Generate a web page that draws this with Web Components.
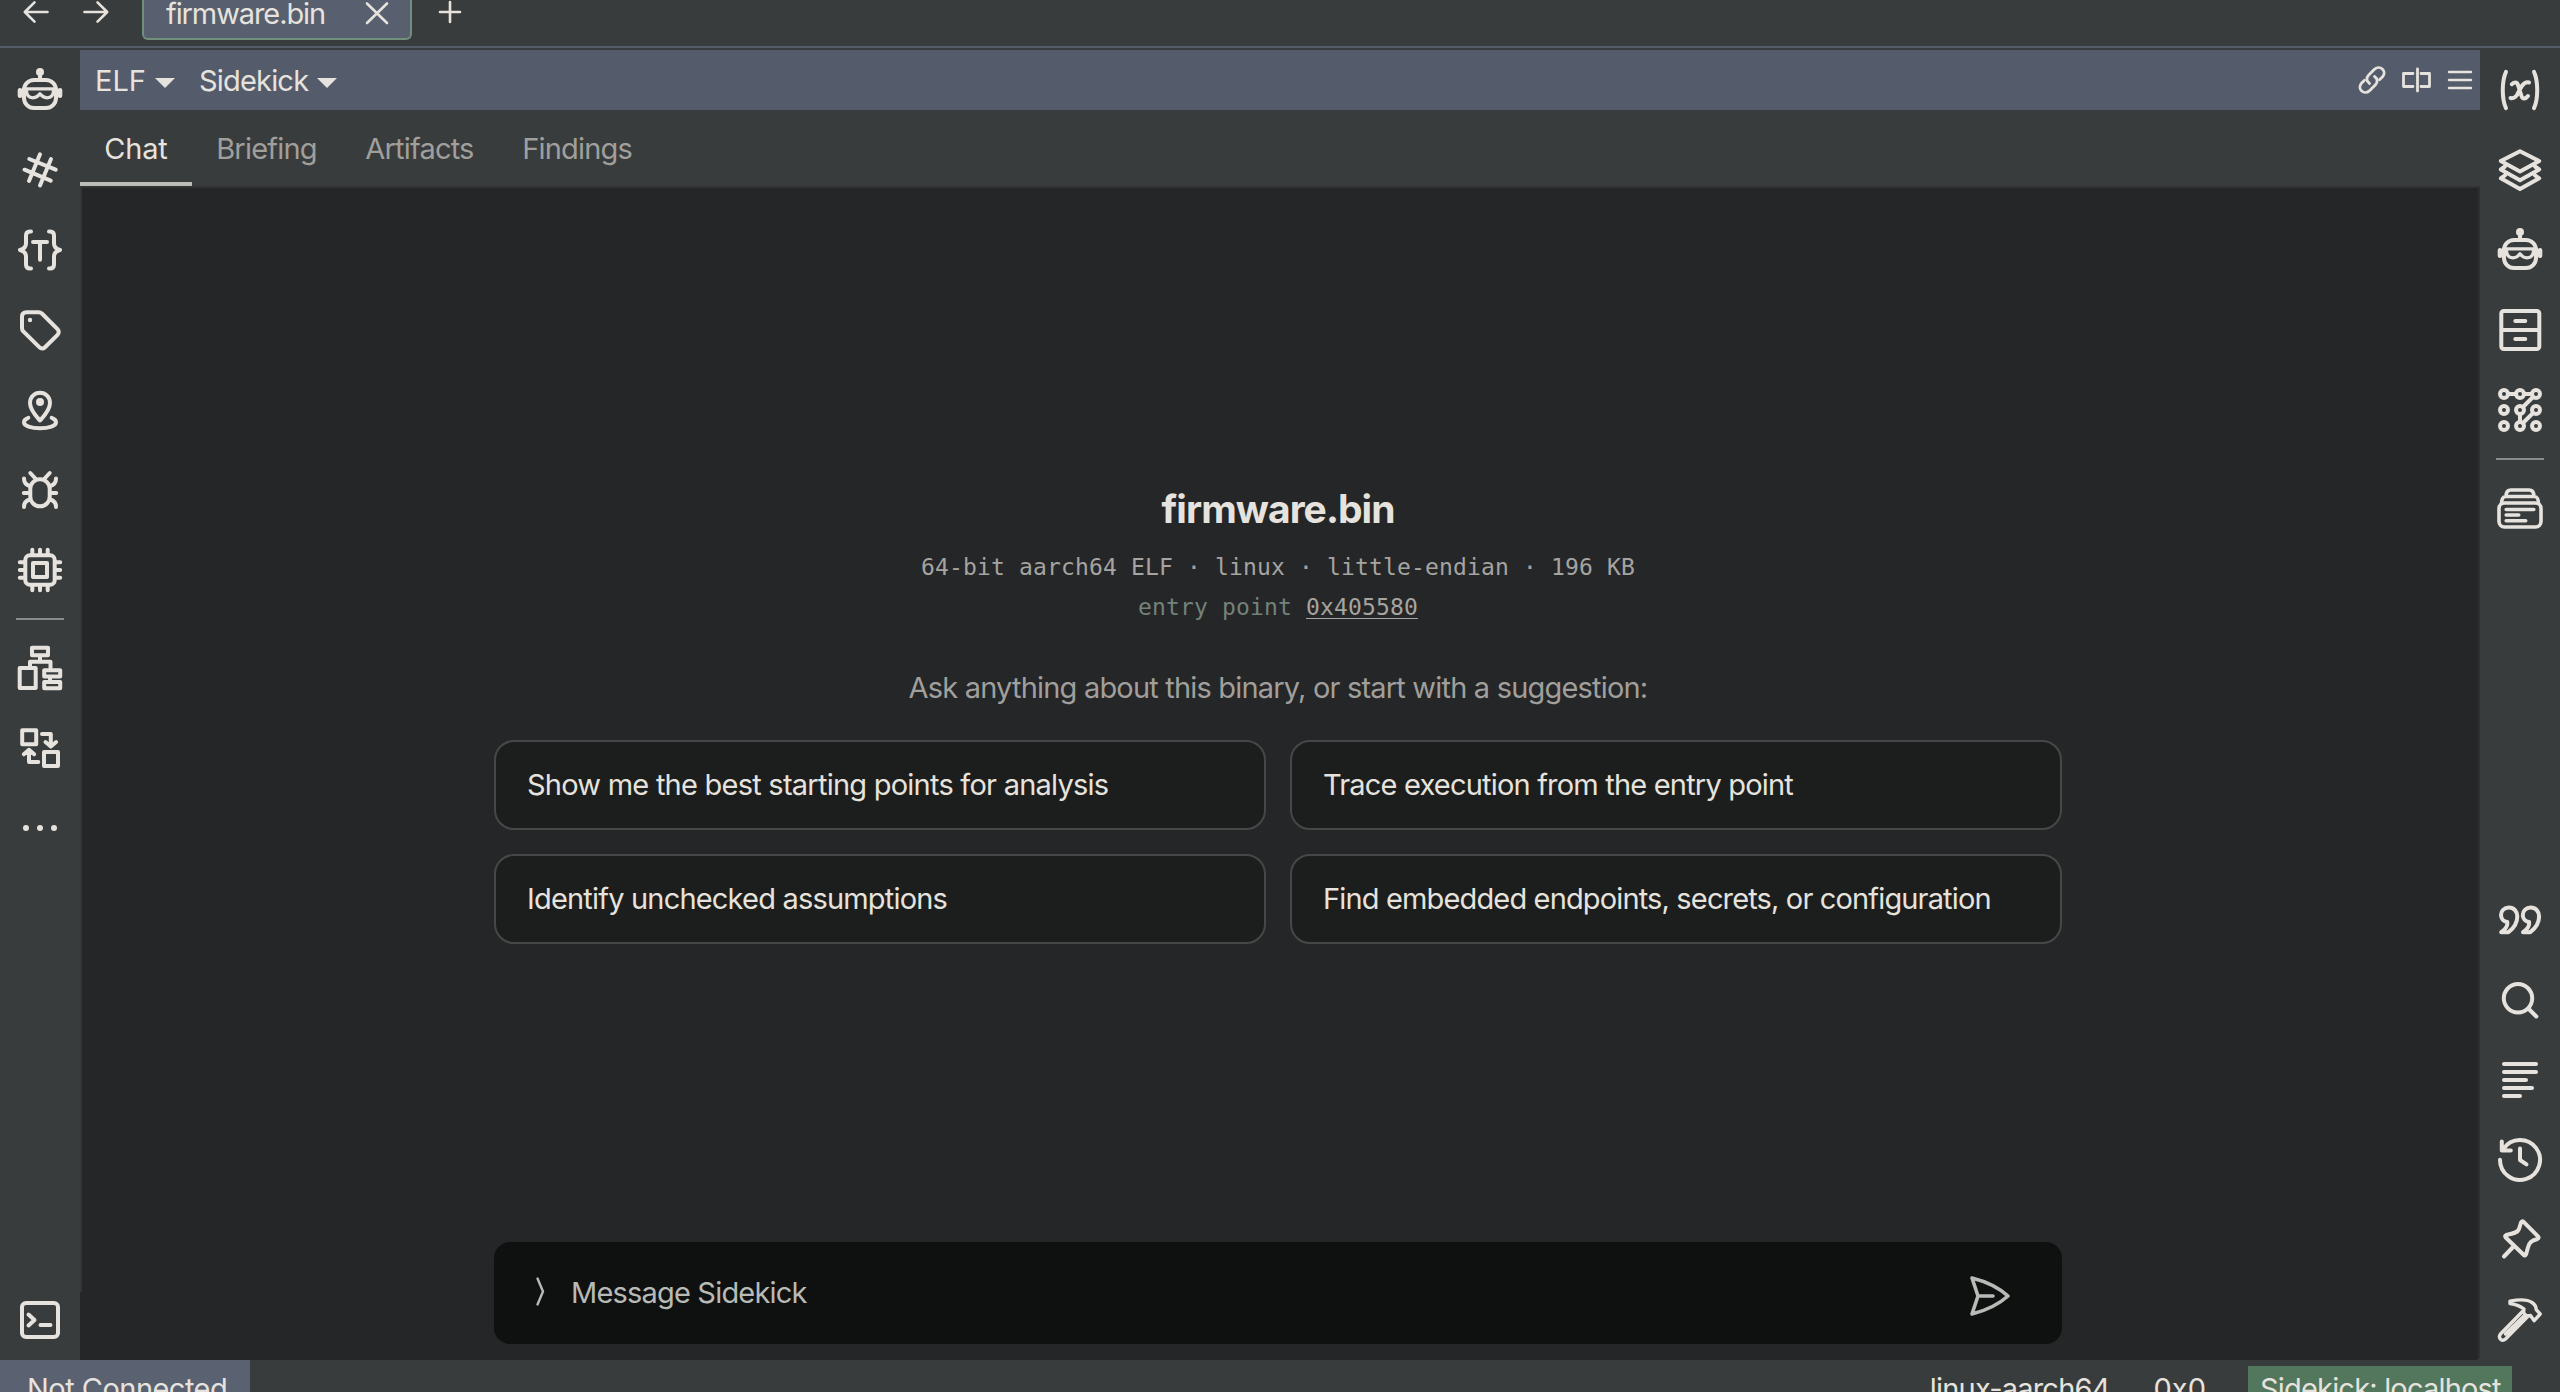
<!DOCTYPE html>
<html lang="en">
<head>
<meta charset="utf-8">
<title>firmware.bin</title>
<style>
    html, body {
        margin: 0;
        height: 100%;
        overflow: hidden;
        background: #393c3d;
    }

    body {
        --rail: #393c3d;
        --canvas: #252628;
        --accent: #545b6b;
        --text: #e6e3de;
        --muted: #a09f9b;

        color: var(--text);
        font-family: Inter, "Liberation Sans", sans-serif;
        font-size: 29px;
        letter-spacing: -0.81px;
        white-space: nowrap;
    }
</style>
</head>
<body>
<app-window>
    <window-tabs slot="tabs">firmware.bin</window-tabs>

    <side-rail slot="left">
        <rail-icon name="robot"></rail-icon>
        <rail-icon name="hash"></rail-icon>
        <rail-icon name="types"></rail-icon>
        <rail-icon name="tag"></rail-icon>
        <rail-icon name="pin"></rail-icon>
        <rail-icon name="bug"></rail-icon>
        <rail-icon name="chip"></rail-icon>
        <rail-separator></rail-separator>
        <rail-icon name="hierarchy"></rail-icon>
        <rail-icon name="swap"></rail-icon>
        <rail-icon name="dots"></rail-icon>
        <rail-icon name="terminal" slot="bottom"></rail-icon>
    </side-rail>

    <pane-header slot="header">
        <drop-label style="width: 104px; letter-spacing: 0">ELF</drop-label>
        <drop-label>Sidekick</drop-label>
    </pane-header>

    <tab-strip slot="header">
        <tab-item active style="letter-spacing: -0.2px">Chat</tab-item>
        <tab-item>Briefing</tab-item>
        <tab-item>Artifacts</tab-item>
        <tab-item>Findings</tab-item>
    </tab-strip>

    <chat-welcome>
        <span slot="title">firmware.bin</span>
        <span slot="meta">64-bit aarch64 ELF · linux · little-endian · 196 KB</span>
        <span slot="address">0x405580</span>
        <suggestion-card style="letter-spacing: -0.76px">Show me the best starting points for analysis</suggestion-card>
        <suggestion-card>Trace execution from the entry point</suggestion-card>
        <suggestion-card>Identify unchecked assumptions</suggestion-card>
        <suggestion-card style="letter-spacing: -0.85px">Find embedded endpoints, secrets, or configuration</suggestion-card>
    </chat-welcome>
    <message-box>Message Sidekick</message-box>

    <side-rail slot="right">
        <rail-icon name="variables"></rail-icon>
        <rail-icon name="layers"></rail-icon>
        <rail-icon name="robot"></rail-icon>
        <rail-icon name="cabinet"></rail-icon>
        <rail-icon name="nodes"></rail-icon>
        <rail-separator></rail-separator>
        <rail-icon name="archive"></rail-icon>
        <rail-icon name="quotes" slot="bottom"></rail-icon>
        <rail-icon name="search" slot="bottom"></rail-icon>
        <rail-icon name="lines" slot="bottom"></rail-icon>
        <rail-icon name="history" slot="bottom"></rail-icon>
        <rail-icon name="pushpin" slot="bottom"></rail-icon>
        <rail-icon name="hammer" slot="bottom"></rail-icon>
    </side-rail>

    <status-bar slot="status">
        <span slot="left">Not Connected</span>
        <span>linux-aarch64</span>
        <span style="letter-spacing: 0">0x0</span>
        <span slot="badge">Sidekick: localhost</span>
    </status-bar>
</app-window>

<script>
// All rail icons are drawn on a 48x48 grid with a 4px stroke.
const ICONS = {
    robot: `
        <circle cx="24" cy="6" r="4" fill="currentColor" stroke="none"/>
        <path d="M24 8v5"/>
        <rect x="8" y="14" width="32" height="28" rx="10"/>
        <path stroke-width="4.6" d="M4 24.2v5.6M44 24.2v5.6"/>
        <path stroke-width="3.2" d="M9 22.8H39M10.5 24C10.5 29 12 31.8 17 31.8C20.5 31.8 22 30.5 24 27.8C26 30.5 27.500 31.8 31 31.8C36 31.8 37.500 29 37.500 24"/>`,
    hash: '<path d="M24 8.300 13 35M35 13 24 39.500M13.300 13l26.400 10.700M8.500 23.700l26.200 11"/>',
    types: `
        <path d="M15 5.500h-1c-3 0-4 1.500-4 4v8c0 4-2 5.500-6 6.500 4 1 6 2.500 6 6.500v8c0 2.500 1 4 4 4h1"/>
        <path d="M33 5.500h1c3 0 4 1.500 4 4v8c0 4 2 5.500 6 6.500-4 1-6 2.500-6 6.500v8c0 2.500-1 4-4 4h-1"/>
        <path d="M17 16h14M24 16v17.800"/>`,
    tag: `
        <path d="M10.500 6.200h12.200c1.200 0 2.300.5 3.200 1.300l15.600 15.700c1.700 1.700 1.700 4 0 5.700L29 41.200c-1.700 1.700-4 1.700-5.700 0L7.300 25.400C6.500 24.500 6 23.400 6 22.200V10.700c0-3 1.500-4.500 4.500-4.500z"/>
        <circle cx="14" cy="14" r="2.200" fill="currentColor" stroke="none"/>`,
    pin: `
        <path d="M24 34.500c-4-4.500-10-10.500-10-17.500 0-6 4.500-10.200 10-10.200S34 11 34 17c0 7-6 13-10 17.500z"/>
        <circle cx="24" cy="16" r="4" fill="currentColor" stroke="none"/>
        <path d="M12.300 31.800C9 33 8 34.500 8 36.200c0 3.700 7 6.100 16 6.100s16-2.400 16-6.100c0-1.700-1-3.200-4.300-4.400"/>`,
    bug: `
        <rect x="14.300" y="13.300" width="19.400" height="27" rx="9.500"/>
        <path d="M14.300 7l5.500 6M33.700 7l-5.500 6M8 12.500c0 4 2 6.500 6 7.500M40 12.500c0 4-2 6.500-6 7.500M7.800 27h6M40.200 27h-6M8 41c0-4.500 2-6.500 6-7.500M40 41c0-4.500-2-6.500-6-7.500"/>`,
    chip: `
        <rect x="9.300" y="9.300" width="29.400" height="29.400" rx="4.500"/>
        <rect x="17" y="17" width="14" height="14"/>
        <path d="M16.300 3.800V8M24 3.800V8M31.700 3.800V8M16.300 40v4.200M24 40v4.200M31.700 40v4.200M3.800 16.300H8M3.800 24H8M3.800 31.700H8M40 16.300h4.200M40 24h4.200M40 31.700h4.200"/>`,
    hierarchy: `
        <rect x="16" y="3.700" width="16" height="7.600"/>
        <rect x="3.700" y="24" width="16" height="20"/>
        <path d="M24 12v5M14 23v-5.200h20.500V24"/>
        <rect x="28.200" y="26.200" width="16" height="6.200"/>
        <path d="M34 33v4"/>
        <rect x="28.200" y="38" width="16" height="6.200"/>`,
    swap: `
        <rect x="6.200" y="6.200" width="14" height="14"/>
        <rect x="28" y="28" width="14" height="14"/>
        <path d="M26 10h8.800v12M29.500 18l5.300 4.500 5.300-4.500M22.300 38H13V26M7.800 30.300 13 25.800l5.200 4.500"/>`,
    dots: `
        <g fill="currentColor" stroke="none"><circle cx="10" cy="24" r="3"/><circle cx="24" cy="24" r="3"/><circle cx="38" cy="24" r="3"/></g>`,
    terminal: `
        <rect x="6" y="7" width="36" height="34" rx="4"/>
        <path d="M12.500 18.500l6 5.500-6 5.500M24.500 29h10"/>`,
    variables: `
        <path d="M10 5.800C5.700 15 5.700 33 10 42.200M38 5.800c4.300 9.200 4.300 27.200 0 36.400"/>
        <path d="M15.800 18.200c2-2.400 5.200-2.600 6.200.8l3.500 11c1 3.400 4 3.200 6.500 0M33 16.500c-3-1-5 .5-7.500 4L21 29c-2 3-4 3.600-6.500 3"/>`,
    layers: `
        <path d="M24 5.200 43.200 15 24 25.500 4.800 15z"/>
        <path d="M9 20.500l-4.200 3L24 34.200l19.200-10.700-4.200-3M9 29.300l-4.200 3L24 43l19.200-10.700-4.200-3"/>`,
    cabinet: `
        <rect x="5.300" y="5" width="38" height="38" rx="2.500"/>
        <path d="M6 24h36M19.300 15h10M19.300 33h10"/>`,
    nodes: `
        <circle cx="8" cy="8" r="4"/><circle cx="24" cy="8" r="4"/><circle cx="40" cy="8" r="4"/>
        <circle cx="8" cy="24" r="4"/><circle cx="24" cy="24" r="4"/><circle cx="40" cy="24" r="4"/>
        <circle cx="8" cy="40" r="4"/><circle cx="24" cy="40" r="4"/><circle cx="40" cy="40" r="4"/>
        <path d="M12 8h8M28 8h8M37 11 27 21M24 28v8M27 37l10-10"/>`,
    archive: `
        <g stroke-width="3.600"><rect x="3" y="19" width="42" height="24" rx="5.500"/>
        <path d="M5.500 19.500c0-4 1.500-7 4-7h29c2.500 0 4 3 4 7M10 12.500C10 8 11.500 6 15 6h18c3.500 0 5 2 5 6.500M10.200 25.500h27.600M10.200 31h12.500M10.200 36.800h19.500"/></g>`,
    quotes: `
        <path d="M5.200 36.200C9 33.500 11.300 31 11.300 28V26C7.500 25.500 5 22.500 5 19C5 14.700 8.500 11.500 12.800 11.500C18 11.500 21.300 15.500 21.300 20.500C21.300 27 18 32 12.500 36.200z"/>
        <path d="M27 36.200C30.800 33.500 33.100 31 33.100 28V26C29.300 25.500 26.800 22.500 26.800 19C26.800 14.700 30.300 11.500 34.600 11.500C39.800 11.500 43.100 15.500 43.100 20.500C43.100 27 39.800 32 34.300 36.200z"/>`,
    search: '<circle cx="22" cy="22.300" r="14.200"/><path d="M32.300 32.500l8 8"/>',
    lines: '<path d="M8 8h32M8 16h32M8 24h22M8 32h28M8 40h16"/>',
    history: `
        <path d="M4 23.800A20 20 0 1 0 7.500 12.600M5.800 5.500v9h9"/>
        <path d="M24 12.500V24l6.500 4.300"/>`,
    pushpin: `
        <path d="M23 13l2-6.500c.6-1.300 1.600-1.600 2.600-.6L42 20.300c1 1 .7 2.200-.6 2.700-6.400 1.600-8 3.500-9.300 8l-2 7.300c-.5 1.300-1.600 1.500-2.500.5L9.700 21.500c-1-1-.7-2 .5-2.500C17 17.500 21.500 17 23 13z"/>
        <path d="M17.500 30.500 8 40.500"/>`,
    hammer: `
        <path stroke-width="3.400" d="M14 5.200C22 3.500 31 3 36 6.500c3 2 4.200 4 4.200 7.200l4 4.300-6 6.700-3.700-5.200-4 .5-3-3.500.5-3.500C25 10.500 20 8.500 14 7.500z"/>
        <path stroke-width="3.400" d="M26.500 15.500 4.500 38c-3 4 1.500 8.200 5 5L32 20.300M28 20 9.500 38"/>`
};

const SVG_STYLE = `
    svg {
        display: block;
        fill: none;
        stroke: currentColor;
        stroke-linecap: round;
        stroke-linejoin: round;
    }`;

function define(name, html) {
    customElements.define(name, class extends HTMLElement {
        constructor() {
            super();
            this.attachShadow({mode: 'open'});
        }

        connectedCallback() {
            this.shadowRoot.innerHTML = typeof html === 'function' ? html(this) : html;
        }
    });
}

define('app-window', `<style>
    :host {
        display: grid;
        grid-template-rows: 46px 2px 1312px 32px;
        height: 1392px;
        overflow: hidden;
    }
    .rule { background: var(--accent); }
    .body {
        display: grid;
        grid-template-columns: 80px 2400px 80px;
    }
    .main {
        display: flex;
        flex-direction: column;
        padding-top: 2px;
    }
    .canvas {
        flex: 1;
        display: flex;
        flex-direction: column;
        align-items: center;
        box-sizing: border-box;
        padding: 0 2px 16px 0;
        border-right: 2px solid #2d2f30;
        border-top: 2px solid #303233;
        background: linear-gradient(#333637, #333637) 0 0 / 2px 1104px no-repeat var(--canvas);
        border-bottom-right-radius: 4px;
    }
</style>
<slot name="tabs"></slot>
<div class="rule"></div>
<div class="body">
    <slot name="left"></slot>
    <div class="main">
        <slot name="header"></slot>
        <div class="canvas"><slot></slot></div>
    </div>
    <slot name="right"></slot>
</div>
<slot name="status"></slot>`);

define('window-tabs', `<style>
    ${SVG_STYLE}
    :host {
        display: flex;
        align-items: flex-start;
        height: 46px;
        padding-left: 22px;
    }
    svg { stroke-width: 2.6; }
    .tab {
        display: flex;
        align-items: center;
        box-sizing: border-box;
        width: 270px;
        height: 40px;
        margin: 0 26px 0 32px;
        padding: 0 21px 12px 22px;
        border: 2px solid #708f7d;
        border-top: 0;
        border-radius: 0 0 6px 6px;
        background: #585f6e;
        letter-spacing: -1.09px;
    }
    .tab svg { margin-left: auto; }
</style>
<svg width="28" height="24"><path d="M25.500 12H3M12.500 2.300 2.800 12l9.700 9.700"/></svg>
<svg width="28" height="24" style="margin-left: 32px"><path d="M2.500 12H25M15.500 2.300l9.700 9.700-9.700 9.700"/></svg>
<div class="tab"><slot></slot><svg width="24" height="26"><path d="M2 3.500 22 23M22 3.500 2 23"/></svg></div>
<svg width="24" height="24"><path d="M12 2v20M2 12h20"/></svg>`);

define('side-rail', `<style>
    :host {
        display: flex;
        flex-direction: column;
        justify-content: space-between;
        padding-top: 2px;
        background: var(--rail);
    }
</style>
<div><slot></slot></div>
<div><slot name="bottom"></slot></div>`);

define('rail-icon', (el) => `<style>
    ${SVG_STYLE}
    :host {
        display: grid;
        place-items: center;
        height: 80px;
    }
    svg { stroke-width: 4; overflow: visible; }
</style>
<svg width="48" height="48" viewBox="0 0 48 48">${ICONS[el.getAttribute('name')]}</svg>`);

define('rail-separator', `<style>
    :host {
        display: block;
        height: 2px;
        margin: 8px 16px;
        background: #8b8c8a;
    }
</style>`);

define('pane-header', `<style>
    ${SVG_STYLE}
    :host {
        display: flex;
        align-items: center;
        height: 60px;
        padding: 0 6px 0 15px;
        background: var(--accent);
    }
    .tools {
        display: flex;
        align-items: center;
        gap: 14px;
        margin-left: auto;
    }
    svg { stroke-width: 2.8; }
</style>
<slot></slot>
<div class="tools">
    <svg width="30" height="30" viewBox="1 0 30 30">
        <path d="M12.500 18.500c-3.300-2.200-3.300-5.800-1-8.200l6.200-6.200c5.200-4.600 12.400 1.900 8.100 7.300l-3.300 3.300"/>
        <path d="M17.500 11.500c3.300 2.200 3.300 5.800 1 8.200l-6.200 6.200c-5.200 4.600-12.400-1.900-8.100-7.300l3.300-3.300"/>
    </svg>
    <svg width="30" height="30" viewBox="1 0 30 30"><path d="M12 8.500H2.500v13H12M20 8.500h8.500v13H20M16.500 4v22"/></svg>
    <svg width="28" height="30" viewBox="0 0 28 30"><path stroke-width="2.4" d="M3 7h22M3 15h22M3 23h22"/></svg>
</div>`);

define('drop-label', `<style>
    :host {
        display: flex;
        align-items: center;
        gap: 9px;
    }
    i {
        margin-top: 6px;
        border: 10px solid transparent;
        border-top-color: var(--text);
        border-bottom: 0;
    }
</style>
<slot></slot><i></i>`);

define('tab-strip', `<style>
    :host {
        display: flex;
        height: 76px;
        background: var(--rail);
    }
</style>
<slot></slot>`);

define('tab-item', `<style>
    :host {
        display: flex;
        align-items: center;
        padding: 0 24.3px;
        color: var(--muted);
    }
    :host([active]) {
        color: var(--text);
        box-shadow: inset 0 -4px #bcbdb9;
    }
</style>
<slot></slot>`);

define('chat-welcome', `<style>
    :host {
        flex: 1;
        display: flex;
        flex-direction: column;
        align-items: center;
        justify-content: center;
        width: 1568px;
        padding-bottom: 2px;
    }
    .title {
        margin-bottom: 14px;
        font-size: 39px;
        font-weight: 700;
        line-height: 48px;
        letter-spacing: -0.95px;
    }
    .mono {
        font: 23px/40px "DejaVu Sans Mono", monospace;
        letter-spacing: 0.15px;
        color: #a5a4a0;
    }
    .dim { color: #74827a; }
    .link {
        text-decoration: underline;
        text-decoration-thickness: 1px;
        text-underline-offset: 3px;
    }
    .ask {
        margin: 43px 0 34px;
        line-height: 36px;
        color: var(--muted);
    }
    .cards {
        display: grid;
        grid-template-columns: 1fr 1fr;
        gap: 24px;
        width: 100%;
    }
</style>
<div class="title"><slot name="title"></slot></div>
<div class="mono"><slot name="meta"></slot></div>
<div class="mono"><span class="dim">entry point</span> <span class="link"><slot name="address"></slot></span></div>
<div class="ask">Ask anything about this binary, or start with a suggestion:</div>
<div class="cards"><slot></slot></div>`);

define('suggestion-card', `<style>
    :host {
        display: flex;
        align-items: center;
        box-sizing: border-box;
        height: 90px;
        padding: 0 31px;
        border: 2px solid #464847;
        border-radius: 20px;
        background: #1c1e1d;
    }
</style>
<slot></slot>`);

define('message-box', `<style>
    ${SVG_STYLE}
    :host {
        display: flex;
        align-items: center;
        box-sizing: border-box;
        width: 1568px;
        height: 102px;
        padding: 0 50px 0 40px;
        border-radius: 16px;
        background: #0f1110;
        color: #b8bab6;
    }
    .caret { margin-bottom: 2px; stroke-width: 2.4; }
    .text { margin: 0 0 2px 23px; }
    .send { margin: 6px 0 0 auto; stroke-width: 3.6; }
</style>
<svg class="caret" width="14" height="32"><path d="M3.500 2.500 9 15.500 3.500 28.500"/></svg>
<span class="text"><slot></slot></span>
<svg class="send" width="44" height="44" viewBox="0 0 44 44"><path d="M4 4c12 3 26 9 36 18-10 9-24 15-36 18l6-18zM10 22h15"/></svg>`);

define('status-bar', `<style>
    :host {
        display: flex;
        height: 32px;
        overflow: hidden;
        line-height: 57px;
    }
    .state {
        width: 223px;
        padding-left: 27px;
        background: #5a6170;
        letter-spacing: -0.53px;
    }
    .info {
        display: flex;
        gap: 44px;
        margin-left: auto;
    }
    .badge {
        box-sizing: border-box;
        width: 264px;
        margin: 6px 48px 0 42px;
        padding-left: 12px;
        background: #52775c;
        line-height: 45px;
    }
</style>
<div class="state"><slot name="left"></slot></div>
<div class="info"><slot></slot></div>
<div class="badge"><slot name="badge"></slot></div>`);
</script>
</body>
</html>
